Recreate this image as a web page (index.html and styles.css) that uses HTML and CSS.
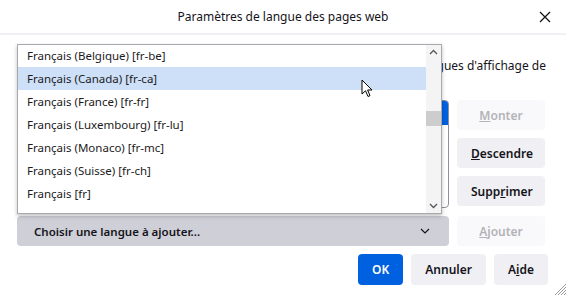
FILE: index.html
```html
<!DOCTYPE html>
<html lang="fr">
  <head>
    <meta charset="UTF-8" />
    <meta name="viewport" content="width=device-width, initial-scale=1.0" />
    <title>Paramètres de langue des pages web</title>
    <link rel="stylesheet" href="styles.css">
  </head>
  <body>
    <div class="dialog">
      <header class="dialog-header">
        <span></span>
        <h1 class="dialog-title">Paramètres de langue des pages web</h1>
        <button class="close-btn" aria-label="Fermer">
          <svg width="12" height="12" viewBox="0 0 12 12">
            <path d="M1 1 L11 11 M11 1 L1 11" stroke="#15141a" stroke-width="1.3" fill="none" />
          </svg>
        </button>
      </header>

      <div class="dialog-body">
        <p class="intro">
          <span class="intro-line">Certaines pages existent en plusieurs langues. Choisissez les langues d'affichage de</span>
          ces pages, par ordre de préférence :
        </p>

        <div class="lang-row">
          <ul class="active-list">
            <li class="selected">Français (France) [fr-fr]</li>
            <li>Anglais (États-Unis) [en-us]</li>
            <li>Anglais [en]</li>
          </ul>
          <div class="side-buttons">
            <button class="btn" disabled><u>M</u>onter</button>
            <button class="btn"><u>D</u>escendre</button>
            <button class="btn">Supp<u>r</u>imer</button>
          </div>
        </div>

        <div class="add-row">
          <div class="lang-select">
            <span>Choisir une langue à ajouter...</span>
            <svg width="12" height="8" viewBox="0 0 12 8">
              <path d="M2 2 L6 6 L10 2" stroke="#15141a" stroke-width="1.2" fill="none" />
            </svg>
          </div>
          <button class="btn side" disabled><u>A</u>jouter</button>
        </div>

        <div class="dialog-footer">
          <button class="btn primary">OK</button>
          <button class="btn">Annuler</button>
          <button class="btn">A<u>i</u>de</button>
        </div>
      </div>

      <!-- liste déroulante ouverte -->
      <div class="popup">
        <ul class="popup-list">
          <li>Français (Belgique) [fr-be]</li>
          <li class="hover">Français (Canada) [fr-ca]</li>
          <li>Français (France) [fr-fr]</li>
          <li>Français (Luxembourg) [fr-lu]</li>
          <li>Français (Monaco) [fr-mc]</li>
          <li>Français (Suisse) [fr-ch]</li>
          <li>Français [fr]</li>
          <li>Frison [fy]</li>
        </ul>
        <div class="scrollbar">
          <svg class="arrow" width="15" height="14" viewBox="0 0 15 14">
            <path d="M4 9 L7.5 5.5 L11 9" stroke="#555" stroke-width="1.3" fill="none" />
          </svg>
          <div class="track"><div class="thumb"></div></div>
          <svg class="arrow" width="15" height="14" viewBox="0 0 15 14">
            <path d="M4 5 L7.5 8.5 L11 5" stroke="#555" stroke-width="1.3" fill="none" />
          </svg>
        </div>
      </div>

      <svg class="cursor" width="13" height="20" viewBox="0 0 13 20">
        <path d="M1 1 L1 15 L4.5 11.8 L7 17.5 L9 16.6 L6.6 11 L11 11 Z" fill="#fff" stroke="#000" stroke-width="1" stroke-linejoin="round" />
      </svg>

      <svg class="grip" width="12" height="12" viewBox="0 0 12 12">
        <path d="M12 1 L1 12 M12 4 L4 12 M12 7 L7 12 M12 10 L10 12" stroke="#9a9aa0" stroke-width="1" />
      </svg>
    </div>
  </body>
</html>
```

FILE: styles.css
```css
* {
  margin: 0;
  padding: 0;
  box-sizing: border-box;
}

body {
  font-family: "Noto Sans", "Liberation Sans", sans-serif;
  font-size: 12px;
  color: #15141a;
  background-color: #fff;
  width: 566px;
  height: 295px;
  overflow: hidden;
}

.dialog {
  position: relative;
  height: 100%;
}

.dialog-header {
  height: 35px;
  display: grid;
  grid-template-columns: 1fr auto 1fr;
  align-items: center;
  border-bottom: 2px solid #f0f0f4;
}

.dialog-title {
  font-size: 12px;
  font-weight: 400;
}

.close-btn {
  justify-self: end;
  margin-right: 13px;
  width: 16px;
  height: 16px;
  border: none;
  background: none;
  display: flex;
  align-items: center;
  justify-content: center;
}

.dialog-body {
  padding: 22px 21px 0 17px;
}

.intro {
  line-height: 18px;
  margin-right: -1px;
}

.intro-line {
  display: block;
  text-align: right;
}

.lang-row {
  display: flex;
  gap: 8px;
  margin-top: 7px;
}

.active-list {
  flex: 1;
  height: 108px;
  list-style: none;
  border: 1px solid #8f8f9d;
  border-radius: 4px;
  overflow: hidden;
}

.active-list li {
  height: 24px;
  line-height: 24px;
  padding-left: 10px;
}

.active-list li.selected {
  background-color: #0061e0;
  color: #fff;
}

.side-buttons {
  width: 88px;
  display: flex;
  flex-direction: column;
  gap: 8px;
}

.btn {
  font-family: inherit;
  font-size: 12px;
  font-weight: 600;
  color: #15141a;
  background-color: #f0f0f4;
  border: none;
  border-radius: 4px;
  height: 30px;
  padding: 0 14px;
}

.btn:disabled {
  background-color: #f9f9fb;
  color: #b3b3b8;
}

.side-buttons .btn,
.btn.side {
  width: 88px;
}

.add-row {
  display: flex;
  gap: 8px;
  margin-top: 8px;
}

.lang-select {
  flex: 1;
  height: 30px;
  background-color: #cfcfd8;
  border-radius: 4px;
  display: flex;
  align-items: center;
  justify-content: space-between;
  padding: 0 18px 0 17px;
  font-size: 11.5px;
  font-weight: 600;
}

.dialog-footer {
  display: flex;
  justify-content: flex-end;
  gap: 8px;
  margin-top: 8px;
  margin-right: -3px;
}

.dialog-footer .btn {
  height: 31px;
}

.btn.primary {
  background-color: #0061e0;
  color: #fff;
}

.popup {
  position: absolute;
  left: 17px;
  top: 44px;
  width: 425px;
  height: 170px;
  background-color: #fff;
  border: 1px solid #a8a8ae;
  box-shadow: 0 2px 4px rgba(0, 0, 0, 0.25);
  display: flex;
  overflow: hidden;
}

.popup-list {
  flex: 1;
  list-style: none;
  margin-top: -1px;
  font-size: 11.5px;
}

.popup-list li {
  height: 23px;
  line-height: 23px;
  padding-left: 9px;
  color: #1c1b22;
}

.popup-list li.hover {
  background-color: #cde0f8;
}

.scrollbar {
  width: 15px;
  background-color: #f4f4f4;
  display: flex;
  flex-direction: column;
}

.scrollbar .track {
  flex: 1;
  padding-top: 52px;
}

.scrollbar .thumb {
  height: 15px;
  background-color: #cdcdcd;
}

.cursor {
  position: absolute;
  left: 361px;
  top: 79px;
}

.grip {
  position: absolute;
  right: 0;
  bottom: 0;
}
```
